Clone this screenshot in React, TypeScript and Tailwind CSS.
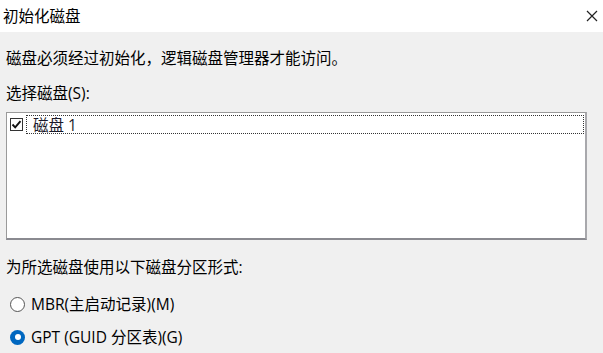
import React from "react";

const font = { fontFamily: '"Open Sans", "Noto Sans CJK SC", sans-serif' };

export default function App() {
  return (
    <div className="w-[603px] h-[353px] flex flex-col bg-[#f0f0f0] text-black overflow-hidden" style={font}>
      <div className="h-[32px] bg-white flex items-center justify-between pl-[3px] pr-[5px] shrink-0">
        <span className="text-[15.5px] leading-[20px]">初始化磁盘</span>
        <svg width="12" height="12" viewBox="0 0 12 12" className="mr-[0px]">
          <path d="M1 1 L11 11 M11 1 L1 11" stroke="#222" strokeWidth="1.2" fill="none" />
        </svg>
      </div>
      <div className="flex flex-col px-[6px] text-[15.5px] leading-[20px]">
        <div className="mt-[16px]">磁盘必须经过初始化，逻辑磁盘管理器才能访问。</div>
        <div className="mt-[15px]">选择磁盘(S):</div>
        <div className="mt-[9px] w-[581px] h-[128px] bg-white border border-[#9a9a9a] border-b-2 border-r-2 border-b-[#8a8a90] border-r-[#a8a8ac] pt-[2px] pl-[2px] pr-[1px]">
          <div className="flex items-center h-[19px]">
            <div className="w-[13px] h-[13px] ml-[1px] border border-[#333] bg-white flex items-center justify-center shrink-0">
              <svg width="11" height="11" viewBox="0 0 11 11">
                <path d="M1.5 5.5 L4.2 8.3 L9.5 2.2" stroke="#111" strokeWidth="1.9" fill="none" />
              </svg>
            </div>
            <div className="ml-[3px] flex-1 h-[19px] border border-dotted border-[#333] flex items-center pl-[6px]">
              <span className="text-[#1a1a2a]">磁盘 1</span>
            </div>
          </div>
        </div>
        <div className="mt-[17px]">为所选磁盘使用以下磁盘分区形式:</div>
        <div className="mt-[17px] flex items-center h-[20px]">
          <div className="w-[15px] h-[15px] rounded-full border border-[#555] bg-white ml-[4px] shrink-0" />
          <span className="ml-[6px]">MBR(主启动记录)(M)</span>
        </div>
        <div className="mt-[13px] flex items-center h-[20px]">
          <div className="w-[15px] h-[15px] rounded-full bg-[#0067c0] ml-[4px] shrink-0 flex items-center justify-center">
            <div className="w-[6px] h-[6px] rounded-full bg-white" />
          </div>
          <span className="ml-[6px]">GPT (GUID 分区表)(G)</span>
        </div>
      </div>
    </div>
  );
}
